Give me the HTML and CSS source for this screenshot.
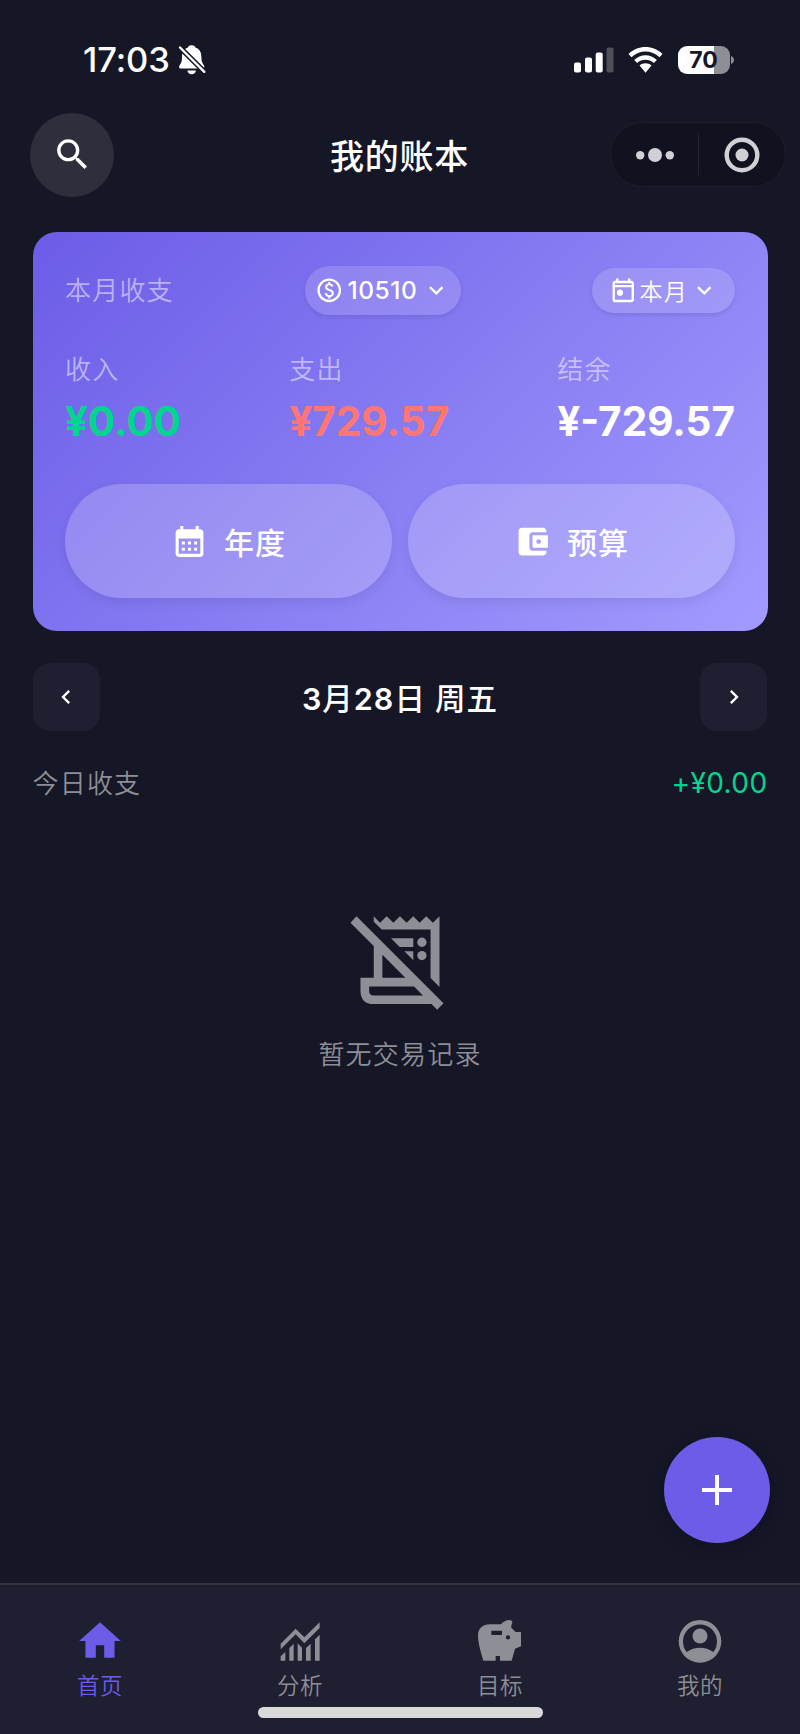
FILE: index.html
```html
<!DOCTYPE html>
<html lang="zh-CN">
<head>
    <meta charset="UTF-8">
    <meta name="viewport" content="width=device-width, initial-scale=1.0">
    <title>我的账本</title>
    <link rel="stylesheet" href="styles.css">
</head>
<body>
    <div class="page">
        <!-- 状态栏 -->
        <div class="status">
            <div class="status-left">
                <span class="time">17:03</span>
                <svg class="bell" viewBox="537 73 84 92">
                    <path fill="#fff" d="M578 76c-7 0-11 4-12 8-12 4-17 14-17 27 0 14-2 19-7 25-3 4-2 10 3 10h66c5 0 6-5 4-9-6-8-8-14-8-26 0-13-5-23-17-27-1-4-5-8-12-8zM565 152h26c-1 7-6 11-13 11s-12-4-13-11z"/>
                    <path stroke="#151626" stroke-width="16" d="M537 77L621 161"/>
                    <path stroke="#fff" stroke-width="7" stroke-linecap="round" d="M543 83L616 156"/>
                </svg>
            </div>
            <div class="status-right">
                <svg class="signal" viewBox="0 0 40 26">
                    <rect x="0" y="15.5" width="7" height="10" rx="2"/>
                    <rect x="11" y="10.5" width="7" height="15" rx="2"/>
                    <rect x="21.7" y="5.5" width="7" height="20" rx="2"/>
                    <rect x="32.5" y="0.5" width="7" height="25" rx="2" opacity=".25"/>
                </svg>
                <svg class="wifi" viewBox="686 79 102 78">
                    <path d="M686 100C714 72 760 72 788 100L779 110C755 87 719 87 695 110ZM703 118C722 99 752 99 771 118L762 127C748 114 726 114 712 127ZM719 134.5C729 126 745 126 755 134.5L737 156.5Z"/>
                </svg>
                <div class="battery"><span>70</span></div>
                <svg class="nub" viewBox="0 0 3 8"><path d="M0 0C4 2 4 6 0 8Z"/></svg>
            </div>
        </div>

        <!-- 标题栏 -->
        <header class="header">
            <button class="search">
                <svg viewBox="0 0 24 24"><path d="M15.5 14h-.79l-.28-.27C15.41 12.59 16 11.11 16 9.5 16 5.91 13.09 3 9.5 3S3 5.91 3 9.5 5.91 16 9.5 16c1.61 0 3.09-.59 4.23-1.57l.27.28v.79l5 4.99L20.49 19l-4.99-5zm-6 0C7.01 14 5 11.99 5 9.5S7.01 5 9.5 5 14 7.01 14 9.5 11.99 14 9.5 14z"/></svg>
            </button>
            <h1 class="title">我的账本</h1>
            <div class="capsule">
                <svg class="dots" viewBox="0 0 40 16"><circle cx="5.2" cy="8.2" r="4.2"/><circle cx="20" cy="8" r="7"/><circle cx="34.8" cy="8.2" r="4.2"/></svg>
                <i class="line"></i>
                <svg class="target" viewBox="0 0 36 36"><circle cx="18" cy="18" r="15.3" fill="none" stroke="#d1d1d5" stroke-width="4.4"/><circle cx="18" cy="18" r="6.5"/></svg>
            </div>
        </header>

        <!-- 收支卡片 -->
        <section class="card">
            <div class="card-top">
                <span class="label">本月收支</span>
                <div class="pill book">
                    <svg viewBox="0 0 24 24"><path d="M12 2C6.48 2 2 6.48 2 12s4.48 10 10 10 10-4.48 10-10S17.52 2 12 2zm0 18c-4.41 0-8-3.59-8-8s3.59-8 8-8 8 3.59 8 8-3.59 8-8 8zm.89-8.9c-1.78-.59-2.64-.96-2.64-1.9 0-1.02 1.11-1.39 1.81-1.39 1.31 0 1.79.99 1.9 1.34l1.58-.67c-.15-.44-.82-1.91-2.66-2.23V5h-1.75v1.26c-2.6.56-2.62 2.85-2.62 2.96 0 2.27 2.25 2.91 3.35 3.31 1.58.56 2.28 1.07 2.28 2.03 0 1.13-1.05 1.61-1.98 1.61-1.82 0-2.34-1.87-2.4-2.09l-1.66.67c.63 2.19 2.28 2.78 3.02 2.96V19h1.75v-1.24c.52-.09 3.02-.59 3.02-3.22.01-1.39-.6-2.61-3-3.44z"/></svg>
                    <span>10510</span>
                    <svg viewBox="0 0 24 24"><path d="M16.59 8.59L12 13.17 7.41 8.59 6 10l6 6 6-6z"/></svg>
                </div>
                <div class="pill month">
                    <svg viewBox="0 0 24 24"><path d="M19 4h-1V2h-2v2H8V2H6v2H5c-1.11 0-2 .9-2 2v14c0 1.1.89 2 2 2h14c1.1 0 2-.9 2-2V6c0-1.1-.9-2-2-2zm0 16H5V9.5h14V20zm0-12.5H5V6h14v1.5z"/><circle cx="9.2" cy="14" r="2.6"/></svg>
                    <span>本月</span>
                    <svg viewBox="0 0 24 24"><path d="M16.59 8.59L12 13.17 7.41 8.59 6 10l6 6 6-6z"/></svg>
                </div>
            </div>
            <div class="stats">
                <div>
                    <p class="label">收入</p>
                    <p class="num income">¥0.00</p>
                </div>
                <div>
                    <p class="label">支出</p>
                    <p class="num expense">¥729.57</p>
                </div>
                <div>
                    <p class="label">结余</p>
                    <p class="num">¥-729.57</p>
                </div>
            </div>
            <div class="actions">
                <button class="action">
                    <svg viewBox="0 0 24 24"><path fill-rule="evenodd" d="M19 4h-1V2h-2v2H8V2H6v2H5c-1.11 0-2 .9-2 2v14c0 1.1.89 2 2 2h14c1.1 0 2-.9 2-2V6c0-1.1-.9-2-2-2zm0 16H5V10h14z"/><path d="M7 12h2v2H7zM11 12h2v2h-2zM15 12h2v2h-2zM7 16h2v2H7zM11 16h2v2h-2zM15 16h2v2h-2z"/></svg>
                    <span>年度</span>
                </button>
                <button class="action">
                    <svg viewBox="0 0 24 24"><path d="M21 18v1c0 1.1-.9 2-2 2H5c-1.11 0-2-.9-2-2V5c0-1.1.89-2 2-2h14c1.1 0 2 .9 2 2v1h-9c-1.11 0-2 .9-2 2v8c0 1.1.89 2 2 2h9zm-9-2h10V8H12v8zm4-2.5c-.83 0-1.5-.67-1.5-1.5s.67-1.5 1.5-1.5 1.5.67 1.5 1.5-.67 1.5-1.5 1.5z"/></svg>
                    <span>预算</span>
                </button>
            </div>
        </section>

        <!-- 日期切换 -->
        <div class="date">
            <button class="arrow"><svg viewBox="0 0 24 24"><path d="M15.41 7.41L14 6l-6 6 6 6 1.41-1.41L10.83 12z"/></svg></button>
            <h2 class="day"><b>3</b>月<b>28</b>日 周五</h2>
            <button class="arrow"><svg viewBox="0 0 24 24"><path d="M10 6L8.59 7.41 13.17 12l-4.58 4.59L10 18l6-6z"/></svg></button>
        </div>
        <div class="today">
            <span class="today-label">今日收支</span>
            <span class="today-num">+¥0.00</span>
        </div>

        <!-- 空记录 -->
        <main class="empty">
            <svg viewBox="151 79 282 283">
                <path d="M170 80L432 342 413 361 152 99ZM222 160H248V265H222ZM182 265H318L344 291H208V303Q208 318 222 318H371L397 344H222Q182 344 182 303ZM222 80L241 99 261 80 281 99 301 80 321 99 341 80 360 99 380 80 400 99 420 80V293L393 266V120H246L222 96ZM274 146H341V172H300ZM314 185H341V212Z"/>
                <circle cx="367" cy="158" r="14"/>
                <circle cx="367" cy="198" r="14"/>
            </svg>
            <p>暂无交易记录</p>
        </main>

        <button class="add">
            <svg viewBox="0 0 30 30"><path d="M13 0h4v13h13v4H17v13h-4V17H0v-4h13z"/></svg>
        </button>

        <!-- 底部导航 -->
        <nav class="tabbar">
            <a class="tab on">
                <svg viewBox="0 0 24 24"><path d="M10 20v-6h4v6h5v-8h3L12 3 2 12h3v8z"/></svg>
                <span>首页</span>
            </a>
            <a class="tab">
                <svg viewBox="826 138 150 150"><path d="M843 221L888 176 914 202 960 157V174L914 220 888 193 843 238ZM843 259L857 246V272H843ZM869 234L882 221V272H869ZM894 220L907 233V272H894ZM919 234L933 221V272H919ZM946 208L960 194V272H946Z"/></svg>
                <span>分析</span>
            </a>
            <a class="tab">
                <svg viewBox="225 138 150 150"><path fill-rule="evenodd" d="M303 163C311 154 326 147 335 152C341 157 332 164 334 173L347 186H363V229L345 236 335 272H300V258H287V272H250C244 250 234 222 234 196C234 176 248 163 270 163ZM274 182V195H306V182ZM324 195.5A6.5 6.5 0 1 0 324 208.5A6.5 6.5 0 1 0 324 195.5Z"/></svg>
                <span>目标</span>
            </a>
            <a class="tab">
                <svg viewBox="825 138 150 150"><path fill-rule="evenodd" d="M900 150A64 64 0 1 0 900 278A64 64 0 1 0 900 150ZM860 246A51 51 0 1 1 940 246C916 229 884 229 860 246Z"/><circle cx="900" cy="198" r="22.5"/></svg>
                <span>我的</span>
            </a>
            <i class="home-bar"></i>
        </nav>
    </div>
</body>
</html>
```
FILE: styles.css
```css
* {
    box-sizing: border-box;
    margin: 0;
    padding: 0;
}

body {
    background: #151626;
    color: #fff;
    font-family: Inter, "Noto Sans CJK SC", sans-serif;
}

button {
    border: 0;
    color: inherit;
    font-family: inherit;
}

svg {
    display: block;
    flex: none;
    fill: currentColor;
}

/* 整页 */
.page {
    position: relative;
    display: flex;
    flex-direction: column;
    width: 800px;
    height: 1734px;
    overflow: hidden;
}

/* 状态栏 */
.status {
    display: flex;
    justify-content: space-between;
    align-items: center;
    height: 112px;
    padding: 7px 66px 0 83px;
}

.status-left,
.status-right {
    display: flex;
    align-items: center;
}

.time {
    font-size: 34.5px;
    font-weight: 550;
    letter-spacing: -0.1px;
}

.bell {
    width: 28px;
    height: 31px;
    margin-left: 8px;
}

.signal {
    width: 40px;
    height: 26px;
}

.wifi {
    width: 35px;
    height: 26px;
    margin-left: 14px;
}

.battery {
    width: 52px;
    height: 28px;
    margin-left: 15px;
    border-radius: 9px;
    background: linear-gradient(90deg, #fff 36px, #8e8e96 36px);
    color: #151626;
    font-size: 23px;
    font-weight: 650;
    line-height: 28px;
    text-align: center;
}

.nub {
    width: 3px;
    height: 8px;
    margin-left: 1.5px;
    fill: #8e8e96;
}

/* 标题栏 */
.header {
    display: grid;
    grid-template-columns: 176px 1fr 176px;
    align-items: center;
    height: 85px;
    padding: 0 14px 0 30px;
}

.search {
    display: flex;
    align-items: center;
    justify-content: center;
    width: 84px;
    height: 84px;
    border-radius: 50%;
    background: #2e2f3d;
}

.search svg {
    width: 41px;
    height: 41px;
}

.title {
    padding-right: 17px;
    font-size: 34px;
    font-weight: 500;
    letter-spacing: 0.8px;
    text-align: center;
}

.capsule {
    display: flex;
    align-items: center;
    height: 65px;
    padding: 0 20px 0 24px;
    border: 1px solid #1e1f2c;
    border-radius: 33px;
    background: #111220;
    color: #d1d1d5;
}

.dots {
    width: 40px;
    height: 16px;
}

.line {
    flex: none;
    width: 1px;
    height: 41px;
    margin: 0 25px 0 23px;
    background: #242532;
}

.target {
    width: 36px;
    height: 36px;
}

/* 收支卡片 */
.card {
    height: 399px;
    margin: 35px 32.5px 0;
    padding: 34px 32.5px 0;
    border-radius: 24px;
    background: linear-gradient(135deg, #6c5ce7, #a29bfe);
}

.card-top,
.stats {
    display: flex;
    align-items: center;
    justify-content: space-between;
}

.label {
    color: rgba(255, 255, 255, 0.5);
    font-size: 26px;
    font-weight: 350;
    letter-spacing: 1.2px;
    line-height: 34px;
}

.pill {
    display: flex;
    align-items: center;
    border-radius: 25px;
    background: rgba(255, 255, 255, 0.15);
    box-shadow: 0 2px 4px rgba(0, 0, 0, 0.1);
}

.pill svg {
    width: 28.5px;
    height: 28.5px;
}

.pill span {
    padding-bottom: 2px;
}

.book {
    width: 156px;
    height: 49px;
    padding-left: 10px;
    font-size: 24.5px;
    font-weight: 500;
    letter-spacing: 0.6px;
}

.book span {
    width: 75px;
    margin-left: 4px;
}

.month {
    width: 143px;
    height: 45px;
    padding-left: 17px;
    font-size: 23px;
    font-weight: 350;
    letter-spacing: 1.2px;
}

.month span {
    width: 50px;
    margin-left: 2px;
}

.stats {
    margin-top: 38px;
}

.num {
    margin-top: 11px;
    font-size: 40.5px;
    font-weight: 700;
    line-height: 48px;
}

.income {
    color: #00d68f;
}

.expense {
    color: #ff7675;
}

.actions {
    display: flex;
    gap: 16px;
    margin-top: 38px;
}

.action {
    display: flex;
    flex: 1;
    align-items: center;
    justify-content: center;
    gap: 16px;
    height: 114px;
    border-radius: 57px;
    background: rgba(255, 255, 255, 0.2);
    box-shadow: 0 4px 12px rgba(0, 0, 0, 0.08);
    font-size: 30px;
    font-weight: 500;
    letter-spacing: 1px;
}

.action svg {
    width: 37px;
    height: 37px;
}

.action span {
    padding-bottom: 1px;
}

/* 日期切换 */
.date {
    display: flex;
    align-items: center;
    justify-content: space-between;
    margin-top: 32px;
    padding: 0 32.5px;
}

.arrow {
    display: flex;
    align-items: center;
    justify-content: center;
    width: 67.5px;
    height: 67.5px;
    border-radius: 17px;
    background: #1e1f31;
}

.arrow svg {
    width: 28px;
    height: 28px;
}

.day {
    font-size: 30.5px;
    font-weight: 500;
    letter-spacing: 1px;
}

.day b {
    font-weight: 600;
}

.today {
    display: flex;
    align-items: center;
    justify-content: space-between;
    margin-top: 34px;
    padding: 0 32.5px;
    line-height: 36px;
}

.today-label,
.empty p {
    color: #8e8e96;
    font-size: 26px;
    font-weight: 350;
    letter-spacing: 1.2px;
}

.today-num {
    padding-bottom: 2px;
    color: #00d68f;
    font-size: 28px;
    font-weight: 380;
    letter-spacing: 0.4px;
}

/* 空记录 */
.empty {
    display: flex;
    flex: 1;
    flex-direction: column;
    align-items: center;
    padding-top: 113px;
    color: #8e8e96;
}

.empty svg {
    width: 94px;
    height: 94px;
    margin-right: 6px;
}

.empty p {
    margin-top: 26px;
    line-height: 38px;
}

/* 新增按钮 */
.add {
    position: absolute;
    right: 30px;
    bottom: 191px;
    display: flex;
    align-items: center;
    justify-content: center;
    width: 106px;
    height: 106px;
    border-radius: 50%;
    background: #6c5ce7;
    box-shadow: 0 4px 16px rgba(0, 0, 0, 0.15);
}

.add svg {
    width: 30px;
    height: 30px;
}

/* 底部导航 */
.tabbar {
    position: relative;
    display: flex;
    height: 151px;
    border-top: 2px solid #333443;
    background: #1e1f31;
}

.tab {
    display: flex;
    flex: 1;
    flex-direction: column;
    align-items: center;
    padding-top: 31px;
    color: #8e8e96;
    font-size: 22.5px;
    font-weight: 350;
    letter-spacing: 0.5px;
}

.tab svg {
    width: 50px;
    height: 50px;
}

.tab span {
    margin-top: 5px;
    line-height: 30px;
}

.on {
    color: #6c5ce7;
}

.home-bar {
    position: absolute;
    left: 258px;
    bottom: 16px;
    width: 285px;
    height: 11px;
    border-radius: 6px;
    background: #d9d9d9;
}
```
